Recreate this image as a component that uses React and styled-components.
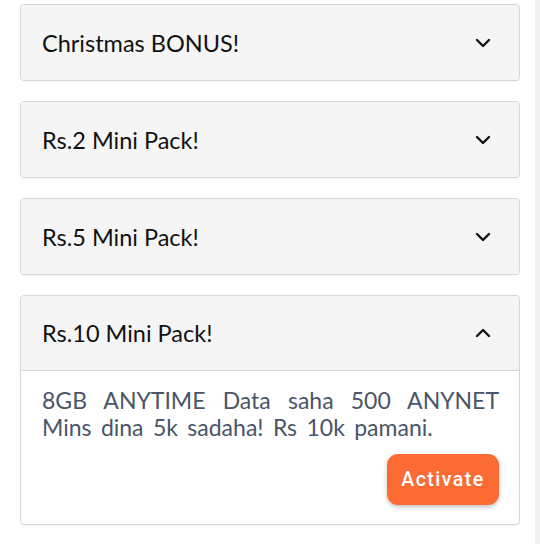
import React, { useState } from "react";
import styled, { createGlobalStyle } from "styled-components";

const Global = createGlobalStyle`
  body {
    margin: 0;
    background: #ffffff;
    font-family: "Lato", "Noto Sans", sans-serif;
  }
`;

const Page = styled.div`
  display: flex;
  width: 540px;
  height: 544px;
  overflow: hidden;
`;

const List = styled.div`
  flex: 1;
  display: flex;
  flex-direction: column;
  gap: 20px;
  padding: 4px 15px 0 20px;
`;

const Track = styled.div`
  width: 5px;
  background: #f1f1f1;
`;

const Card = styled.div`
  border: 1px solid #d6d6d6;
  border-radius: 4px;
  background: #ffffff;
  box-shadow: 0 1px 1px rgba(0, 0, 0, 0.04);
  overflow: hidden;
`;

const Header = styled.button`
  display: flex;
  align-items: center;
  justify-content: space-between;
  width: 100%;
  height: 75px;
  padding: 0 28px 0 21px;
  border: none;
  border-bottom: ${(p) => (p.$open ? "1px solid #d6d6d6" : "none")};
  background: #f5f5f5;
  font-family: "Lato", "Noto Sans", sans-serif;
  font-size: 23.5px;
  color: #111111;
  cursor: pointer;
  text-align: left;
`;

const Body = styled.div`
  padding: 16px 20px 19px 21px;
  display: flex;
  flex-direction: column;
`;

const Text = styled.p`
  margin: 0;
  font-size: 23px;
  line-height: 27px;
  color: #4a5568;
  text-align: justify;
  word-spacing: 3.5px;
`;

const Activate = styled.button`
  align-self: flex-end;
  margin-top: 13px;
  width: 112px;
  height: 51px;
  border: none;
  border-radius: 11px;
  background: #fd6b35;
  color: #ffffff;
  font-family: Roboto, "Noto Sans", sans-serif;
  font-weight: 500;
  font-size: 19.5px;
  letter-spacing: 1.5px;
  box-shadow: 0 2px 4px rgba(0, 0, 0, 0.25);
  cursor: pointer;
`;

const Chevron = ({ up }) => (
  <svg width="16" height="10" viewBox="0 0 16 10" fill="none">
    <path
      d={up ? "M2 8 L8 2 L14 8" : "M2 2 L8 8 L14 2"}
      stroke="#111"
      strokeWidth="2.4"
      strokeLinecap="round"
      strokeLinejoin="round"
    />
  </svg>
);

const packs = [
  { title: "Christmas BONUS!", text: "" },
  { title: "Rs.2 Mini Pack!", text: "" },
  { title: "Rs.5 Mini Pack!", text: "" },
  {
    title: "Rs.10 Mini Pack!",
    text: "8GB ANYTIME Data saha 500 ANYNET Mins dina 5k sadaha! Rs 10k pamani.",
  },
];

export default function App() {
  const [open, setOpen] = useState(3);

  return (
    <Page>
      <Global />
      <List>
        {packs.map((p, i) => (
          <Card key={p.title}>
            <Header $open={open === i} onClick={() => setOpen(open === i ? -1 : i)}>
              <span>{p.title}</span>
              <Chevron up={open === i} />
            </Header>
            {open === i && (
              <Body>
                <Text>{p.text}</Text>
                <Activate>Activate</Activate>
              </Body>
            )}
          </Card>
        ))}
      </List>
      <Track />
    </Page>
  );
}
